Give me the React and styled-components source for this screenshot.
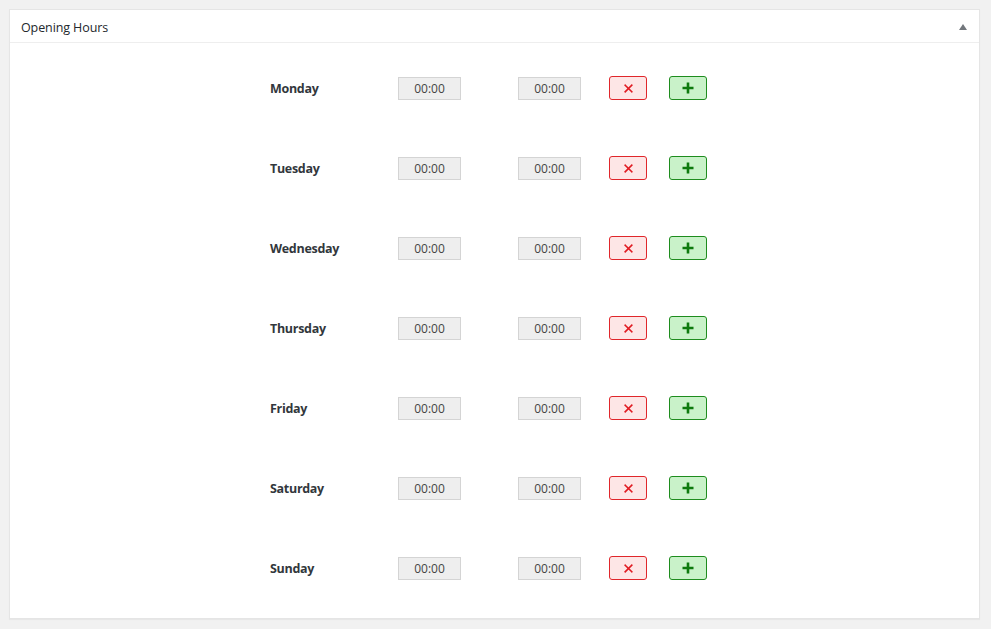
import React from "react";
import styled, { createGlobalStyle } from "styled-components";

const Global = createGlobalStyle`
  html, body { margin: 0; padding: 0; background: #f1f1f1; }
  body { font-family: "Open Sans", "Noto Sans", sans-serif; color: #23282d; }
`;

const Page = styled.div`
  padding: 9px 11px 10px 9px;
`;

const Panel = styled.div`
  background: #fff;
  border: 1px solid #e5e5e5;
  box-shadow: 0 1px 1px rgba(0, 0, 0, 0.04);
`;

const Header = styled.div`
  height: 33px;
  display: flex;
  align-items: center;
  justify-content: space-between;
  padding: 2px 11px 0 11px;
  box-sizing: border-box;
  border-bottom: 1px solid #eeeeee;
`;

const Title = styled.h2`
  margin: 0;
  font-size: 12.5px;
  font-weight: 400;
  color: #23282d;
  letter-spacing: -0.1px;
`;

const Toggle = styled.span`
  width: 0;
  height: 0;
  border-left: 4px solid transparent;
  border-right: 4px solid transparent;
  border-bottom: 6px solid #72777c;
  margin-right: 1px;
`;

const Body = styled.div`
  padding: 5px 0 10px 260px;
`;

const Row = styled.div`
  height: 80px;
  display: flex;
  align-items: center;
`;

const Day = styled.div`
  width: 128px;
  font-size: 12.5px;
  font-weight: 700;
  color: #32373c;
  letter-spacing: -0.3px;
`;

const TimeInput = styled.input`
  box-sizing: border-box;
  width: 63px;
  height: 23px;
  margin: 0 ${(p) => p.$gap}px 0 0;
  padding: 0;
  border: 1px solid #d4d4d4;
  background: #eeeeee;
  color: #444;
  font-family: "Open Sans", "Noto Sans", sans-serif;
  font-size: 12px;
  text-align: center;
  outline: none;
`;

const IconButton = styled.button`
  box-sizing: border-box;
  width: 38px;
  height: 24px;
  margin: 0 ${(p) => p.$gap}px 0 0;
  padding: 0;
  display: flex;
  align-items: center;
  justify-content: center;
  border-radius: 3px;
  border: 1px solid ${(p) => (p.$variant === "add" ? "#1e8c1e" : "#e0262b")};
  background: ${(p) => (p.$variant === "add" ? "#c9f2c9" : "#fde6e6")};
  cursor: pointer;
`;

const days = ["Monday", "Tuesday", "Wednesday", "Thursday", "Friday", "Saturday", "Sunday"];

const Cross = () => (
  <svg width="9" height="9" viewBox="0 0 9 9">
    <path d="M1.2 1.2 L7.8 7.8 M7.8 1.2 L1.2 7.8" stroke="#e01b22" strokeWidth="1.6" strokeLinecap="square" />
  </svg>
);

const Plus = () => (
  <svg width="12" height="12" viewBox="0 0 12 12">
    <path d="M6 0.5 V11.5 M0.5 6 H11.5" stroke="#0d7a0d" strokeWidth="2.6" />
  </svg>
);

export default function App() {
  return (
    <>
      <Global />
      <Page>
        <Panel>
          <Header>
            <Title>Opening Hours</Title>
            <Toggle />
          </Header>
          <Body>
            {days.map((d) => (
              <Row key={d}>
                <Day>{d}</Day>
                <TimeInput $gap={57} defaultValue="00:00" readOnly />
                <TimeInput $gap={28} defaultValue="00:00" readOnly />
                <IconButton $variant="remove" $gap={22} aria-label="Remove">
                  <Cross />
                </IconButton>
                <IconButton $variant="add" $gap={0} aria-label="Add">
                  <Plus />
                </IconButton>
              </Row>
            ))}
          </Body>
        </Panel>
      </Page>
    </>
  );
}
